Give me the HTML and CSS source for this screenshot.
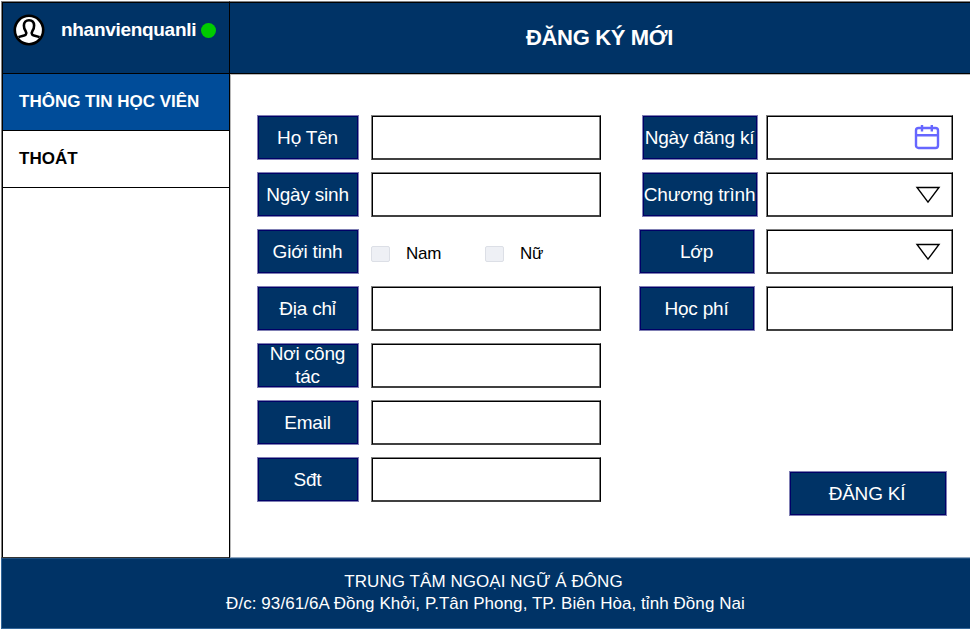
FILE: index.html
```html
<!DOCTYPE html>
<html lang="vi">
<head>
<meta charset="utf-8">
<title>Đăng ký mới</title>
<link rel="stylesheet" href="styles.css">
</head>
<body>
<div class="app">
  <aside class="sidebar">
    <div class="user">
      <svg class="avatar" width="32" height="32" viewBox="0 0 32 32">
        <circle cx="16" cy="16" r="14.2" fill="#fff" stroke="#000" stroke-width="2.6"/>
        <path d="M5.5 23.2C8 21.8 11.5 22 12.8 20.6C13.7 19.3 13.3 18.1 12.6 17C11.3 15.6 10.9 13.6 10.9 11.6C10.9 8.2 13 6.2 16 6.2S21.1 8.2 21.1 11.6C21.1 13.6 20.7 15.6 19.4 17C18.7 18.1 18.3 19.3 19.2 20.6C20.5 22 24 21.8 26.5 23.2" fill="none" stroke="#000" stroke-width="2.6"/>
      </svg>
      <span class="name">nhanvienquanli</span>
      <span class="online"></span>
    </div>
    <nav class="menu">
      <a class="item active">THÔNG TIN HỌC VIÊN</a>
      <a class="item">THOÁT</a>
    </nav>
  </aside>
  <main class="main">
    <header class="header"><h1>ĐĂNG KÝ MỚI</h1></header>
    <form class="form">
      <div class="column">
        <div class="row"><label class="label">Họ Tên</label><div class="input"></div></div>
        <div class="row"><label class="label">Ngày sinh</label><div class="input"></div></div>
        <div class="row"><label class="label">Giới tinh</label>
          <div class="choices">
            <span class="choice"><i class="box"></i>Nam</span>
            <span class="choice"><i class="box"></i>Nữ</span>
          </div>
        </div>
        <div class="row"><label class="label">Địa chỉ</label><div class="input"></div></div>
        <div class="row"><label class="label two-line">Nơi công tác</label><div class="input"></div></div>
        <div class="row"><label class="label">Email</label><div class="input"></div></div>
        <div class="row"><label class="label">Sđt</label><div class="input"></div></div>
      </div>
      <div class="column column-right">
        <div class="row narrow"><label class="label">Ngày đăng kí</label>
          <div class="input">
            <svg class="calendar" width="26" height="26" viewBox="0 0 26 26" fill="none" stroke="#6666ff" stroke-width="2.4">
              <rect x="2" y="4" width="22" height="20" rx="2.5"/>
              <path d="M2 11.3H24M8 1V7.5M17.8 1V7.5"/>
            </svg>
          </div>
        </div>
        <div class="row narrow"><label class="label">Chương trình</label>
          <div class="input"><svg class="arrow" width="26" height="18" viewBox="0 0 26 18"><path d="M2 1.5H24L13 16.2Z" fill="#fff" stroke="#000" stroke-width="1.4"/></svg></div>
        </div>
        <div class="row"><label class="label">Lớp</label>
          <div class="input"><svg class="arrow" width="26" height="18" viewBox="0 0 26 18"><path d="M2 1.5H24L13 16.2Z" fill="#fff" stroke="#000" stroke-width="1.4"/></svg></div>
        </div>
        <div class="row"><label class="label">Học phí</label><div class="input"></div></div>
        <button class="submit" type="button">ĐĂNG KÍ</button>
      </div>
    </form>
  </main>
  <footer class="footer">
    <div class="center-name">TRUNG TÂM NGOẠI NGỮ Á ĐÔNG</div>
    <div class="address">Đ/c: 93/61/6A Đồng Khởi, P.Tân Phong, TP. Biên Hòa, tỉnh Đồng Nai</div>
  </footer>
</div>
</body>
</html>
```
FILE: styles.css
```css
* { box-sizing: border-box; }
body {
  margin: 0;
  background: #fff;
  font-family: "Liberation Sans", Arial, sans-serif;
  overflow: hidden;
}
.app {
  width: 970px;
  height: 629px;
  padding: 1px 0 0 1px;
  display: grid;
  grid-template-columns: 229px 740px;
  grid-template-rows: 557px 71px;
}
.sidebar {
  display: flex;
  flex-direction: column;
  border: 1px solid #000;
  border-top-color: #808080;
  border-left-color: #808080;
  border-bottom-color: #333;
}
.user {
  height: 72px;
  display: flex;
  align-items: flex-start;
  padding: 11px 0 0 10px;
  background: #003366;
  border: 1px solid #000;
  border-right: 0;
}
.avatar { flex: none; }
.name {
  margin: 4px 0 0 16px;
  width: 136px;
  font-size: 19px;
  line-height: 23px;
  font-weight: bold;
  color: #fff;
  letter-spacing: -0.3px;
}
.online {
  width: 15px;
  height: 15px;
  margin: 9px 0 0 4px;
  border-radius: 50%;
  background: #00cc00;
}
.menu { flex: 1; border-left: 1px solid #000; }
.item {
  display: block;
  height: 57px;
  padding-left: 16px;
  font-size: 17px;
  line-height: 55px;
  font-weight: bold;
  color: #000;
  border-bottom: 1px solid #000;
  white-space: nowrap;
}
.active { background: #004c99; color: #fff; }
.main {
  display: flex;
  flex-direction: column;
  border-bottom: 1px solid #8fa6bf;
}
.header {
  height: 73px;
  padding-right: 1px;
  border-top: 1px solid #808080;
  border-bottom: 1px solid #000;
  box-shadow: inset 0 1px #000, 0 1px #b8b8b8;
  background: #003366;
  display: flex;
  align-items: center;
  justify-content: center;
}
h1 {
  margin: 0;
  font-size: 22px;
  line-height: 26px;
  color: #fff;
  letter-spacing: -0.35px;
}
.form {
  flex: 1;
  display: flex;
  padding: 41px 0 0 26px;
  border-left: 1px solid #b8b8b8;
}
.column {
  display: flex;
  flex-direction: column;
  gap: 12px;
  width: 344px;
}
.column-right { margin-left: 38px; width: 314px; }
.row { display: flex; justify-content: space-between; height: 45px; }
.narrow { padding-left: 3px; }
.label, .submit {
  display: flex;
  align-items: center;
  justify-content: center;
  text-align: center;
  border: 1px solid #7f7fb3;
  box-shadow: inset 0 0 0 1px #000066;
  background: #003366;
  color: #fff;
  font-size: 19px;
  line-height: 23px;
  letter-spacing: -0.2px;
}
.label { width: 102px; height: 45px; padding-right: 1px; }
.two-line { padding-bottom: 2px; }
.column-right .label { width: 116px; white-space: nowrap; }
.input {
  width: 230px;
  height: 45px;
  display: flex;
  justify-content: flex-end;
  border: 1px solid #808080;
  border-right-color: #000;
  border-bottom-color: #404040;
  box-shadow: inset 1px 1px #000, inset 0 -1px #404040, inset -1px 0 #808080;
}
.column-right .input { width: 187px; }
.calendar { margin: 8px 12px 0 0; }
.arrow { margin: 13px 11px 0 0; }
.choices { display: flex; width: 230px; padding-top: 13px; }
.choice {
  width: 114px;
  display: flex;
  font-size: 17px;
  line-height: 23px;
  letter-spacing: -0.2px;
  color: #000;
}
.box {
  width: 19px;
  height: 16px;
  margin: 4px 16px 0 0;
  background: #eef0f5;
  border: 1px solid #dcdfe6;
  border-radius: 2px;
}
.submit {
  width: 158px;
  height: 45px;
  margin: 128px 0 0 150px;
  padding: 0 2px 1px 0;
  border-radius: 0;
  font-family: inherit;
}
.footer {
  grid-column: 1 / 3;
  padding: 12px 1px 0 0;
  background: #003366;
  border: 1px solid #336699;
  border-top-color: #1f4f80;
  border-right: 0;
  text-align: center;
  color: #fff;
  font-size: 17px;
  line-height: 22px;
  letter-spacing: 0.06px;
}
.center-name { padding-right: 4px; }
```
